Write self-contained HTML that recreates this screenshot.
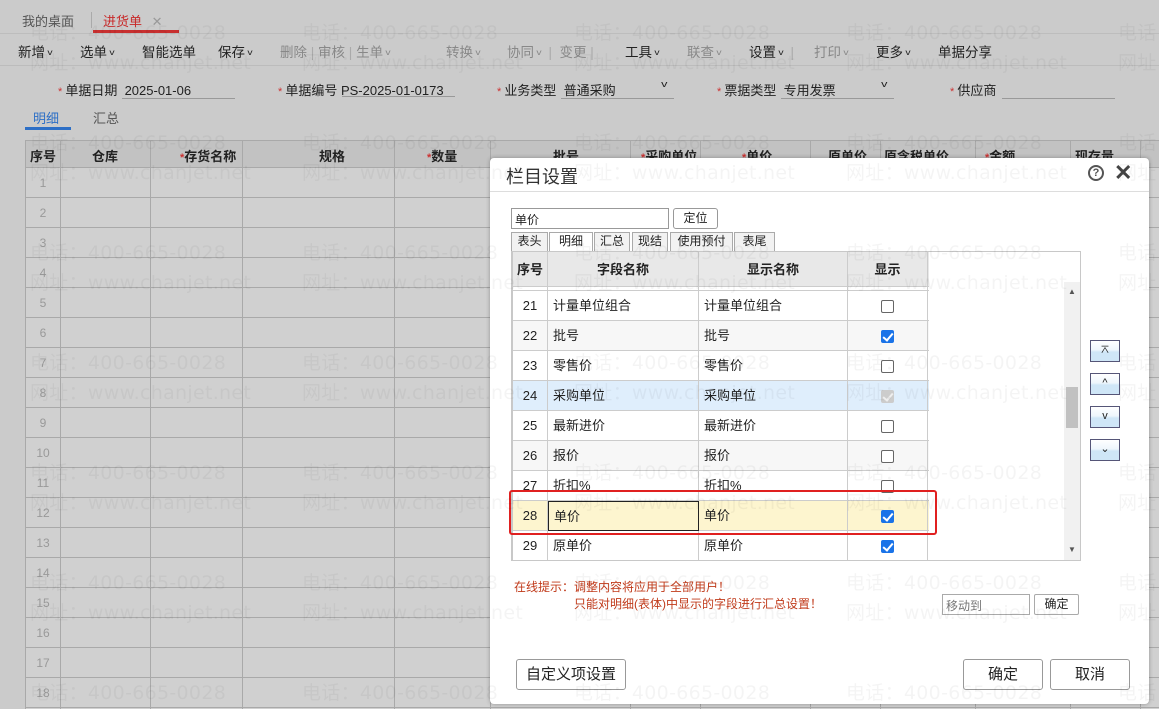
<!DOCTYPE html>
<html style="overflow:hidden;width:1159px;height:709px"><head><meta charset="utf-8"><style>
*{box-sizing:border-box;margin:0;padding:0}
body{width:1159px;height:709px;overflow:hidden;background:#cbcbcb;font-family:"Liberation Sans","Noto Sans CJK SC",sans-serif;font-size:13px;color:#222;position:relative}
.a{position:absolute;white-space:nowrap}
.st{color:#c33;font-size:11px}
.cv{font-size:8px;display:inline-block;transform:scaleX(1.3);margin-left:3px;vertical-align:2px}
.g{position:absolute;border-left:1px solid #a9a9a9}
.wm{position:absolute;font-size:19px;color:rgba(0,0,0,0.045);white-space:nowrap;letter-spacing:0.3px;z-index:50;pointer-events:none;font-family:"DejaVu Sans","Noto Sans CJK SC",sans-serif}
.dlg{position:absolute;left:490px;top:158px;width:659px;height:546px;background:#fff;border-radius:4px;z-index:10;box-shadow:0 0 4px rgba(0,0,0,.3)}
.btn{position:absolute;border:1px solid #999;border-radius:3px;background:#fff;text-align:center;font-size:15px}
.tab{position:absolute;top:74px;height:19px;border:1px solid #aaa;border-bottom:none;background:#f2f2f2;font-size:12px;text-align:center;line-height:17px}
.row{position:absolute;left:0;width:416px;height:30px;border-bottom:1px solid #ccc}
.row div{position:absolute;top:0;height:30px;line-height:30px;border-right:1px solid #ccc}
.cb{position:absolute;left:368px;top:9px;width:13px;height:13px;border:1px solid #666;border-radius:2px;background:#fff}
.cb.on{background:#1a73e8;border-color:#1a73e8}
.cb.on:after{content:"";position:absolute;left:3px;top:0px;width:4px;height:8px;border:solid #fff;border-width:0 2px 2px 0;transform:rotate(40deg)}
.cb.dis{background:#ccc;border-color:#ccc}
.cb.dis:after{content:"";position:absolute;left:3px;top:0px;width:4px;height:8px;border:solid #eee;border-width:0 2px 2px 0;transform:rotate(40deg)}
.mv{position:absolute;left:600px;width:30px;height:22px;border:1px solid #557;background:linear-gradient(#fff 0,#eef6fc 45%,#cfe6f7 55%,#cfe6f7);font-size:11px;text-align:center;line-height:18px}
</style></head><body>
<div class="a" style="left:0;top:0;width:1159px;height:34px;border-bottom:1px solid #bdbdbd"></div>
<div class="a" style="left:22px;top:11px;color:#555">我的桌面</div>
<div class="a" style="left:91px;top:12px;height:16px;border-left:1px solid #aaa"></div>
<div class="a" style="left:103px;top:11px;color:#c82828">进货单 <span style="color:#999;margin-left:6px">✕</span></div>
<div class="a" style="left:93px;top:30px;width:86px;height:3px;background:#c83030"></div>
<div class="a" style="left:0;top:35px;width:1159px;height:31px;border-bottom:1px solid #bcbcbc"></div>
<div class="a" style="left:18px;top:41px;font-size:13.5px">新增<span class="cv">v</span></div>
<div class="a" style="left:80px;top:41px;font-size:13.5px">选单<span class="cv">v</span></div>
<div class="a" style="left:142px;top:41px;font-size:13.5px">智能选单</div>
<div class="a" style="left:218px;top:41px;font-size:13.5px">保存<span class="cv">v</span></div>
<div class="a" style="left:280px;top:41px;font-size:13.5px;color:#888">删除 <span style="color:#aaa">|</span> 审核 <span style="color:#aaa">|</span> 生单<span class="cv">v</span></div>
<div class="a" style="left:446px;top:41px;font-size:13.5px;color:#888">转换<span class="cv">v</span></div>
<div class="a" style="left:507px;top:41px;font-size:13.5px;color:#888">协同<span class="cv">v</span> <span style="color:#aaa">&nbsp;|&nbsp;</span> 变更 <span style="color:#aaa">|</span></div>
<div class="a" style="left:625px;top:41px;font-size:13.5px">工具<span class="cv">v</span></div>
<div class="a" style="left:687px;top:41px;font-size:13.5px;color:#888">联查<span class="cv">v</span></div>
<div class="a" style="left:749px;top:41px;font-size:13.5px">设置<span class="cv">v</span> <span style="color:#aaa">&nbsp;|</span></div>
<div class="a" style="left:814px;top:41px;font-size:13.5px;color:#888">打印<span class="cv">v</span></div>
<div class="a" style="left:876px;top:41px;font-size:13.5px">更多<span class="cv">v</span></div>
<div class="a" style="left:938px;top:41px;font-size:13.5px">单据分享</div>
<div class="a" style="left:58px;top:80px"><span class="st">* </span>单据日期 &nbsp;2025-01-06</div>
<div class="a" style="left:122px;top:98px;width:113px;border-top:1px solid #999"></div>
<div class="a" style="left:278px;top:80px"><span class="st">* </span>单据编号 PS-2025-01-0173</div>
<div class="a" style="left:342px;top:96px;width:113px;border-top:1px solid #999"></div>
<div class="a" style="left:497px;top:80px"><span class="st">* </span>业务类型 &nbsp;普通采购</div>
<div class="a" style="left:662px;top:79px;font-size:9px;transform:scaleX(1.4)">v</div>
<div class="a" style="left:561px;top:98px;width:113px;border-top:1px solid #999"></div>
<div class="a" style="left:717px;top:80px"><span class="st">* </span>票据类型 &nbsp;专用发票</div>
<div class="a" style="left:882px;top:79px;font-size:9px;transform:scaleX(1.4)">v</div>
<div class="a" style="left:781px;top:98px;width:113px;border-top:1px solid #999"></div>
<div class="a" style="left:950px;top:80px"><span class="st">* </span>供应商</div>
<div class="a" style="left:1002px;top:98px;width:113px;border-top:1px solid #999"></div>
<div class="a" style="left:33px;top:108px;color:#2d6fc6">明细</div>
<div class="a" style="left:93px;top:108px;color:#555">汇总</div>
<div class="a" style="left:25px;top:127px;width:46px;height:3px;background:#2d6fc6"></div>
<div class="a" style="left:25px;top:140px;width:1134px;height:569px;background:#d0d0d0;border-top:1px solid #a9a9a9;border-left:1px solid #a9a9a9"></div>
<div class="a" style="left:26px;top:141px;width:1133px;height:27px;background:#c2c2c2;border-bottom:1px solid #a9a9a9"></div>
<div id="grid"></div>
<div class="a" style="left:30px;top:146px;font-weight:bold">序号</div>
<div class="a" style="left:92px;top:146px;font-weight:bold">仓库</div>
<div class="a" style="left:180px;top:146px;font-weight:bold"><span class="st">*</span>存货名称</div>
<div class="a" style="left:319px;top:146px;font-weight:bold">规格</div>
<div class="a" style="left:427px;top:146px;font-weight:bold"><span class="st">*</span>数量</div>
<div class="a" style="left:553px;top:146px;font-weight:bold">批号</div>
<div class="a" style="left:641px;top:146px;font-weight:bold"><span class="st">*</span>采购单位</div>
<div class="a" style="left:742px;top:146px;font-weight:bold"><span class="st">*</span>单价</div>
<div class="a" style="left:828px;top:146px;font-weight:bold">原单价</div>
<div class="a" style="left:884px;top:146px;font-weight:bold">原含税单价</div>
<div class="a" style="left:985px;top:146px;font-weight:bold"><span class="st">*</span>金额</div>
<div class="a" style="left:1075px;top:146px;font-weight:bold">现存量</div>
<script>
var g=document.getElementById('grid'),h='';
[60,150,242,394,490,630,700,810,880,975,1070,1140].forEach(function(x){h+='<div class="g" style="left:'+x+'px;top:141px;height:568px"></div>'});
for(var i=1;i<=18;i++){var y=168+(i-1)*30;h+='<div class="a" style="left:26px;top:'+(y+29)+'px;width:1133px;border-top:1px solid #a9a9a9"></div><div class="a" style="left:26px;top:'+(y+8)+'px;width:34px;text-align:center;color:#999;font-size:12px">'+i+'</div>';}
g.innerHTML=h;
</script>
<div class="dlg">
<div class="a" style="left:16px;top:5px;font-size:18px;color:#333">栏目设置</div>
<div class="a" style="left:598px;top:7px;width:16px;height:16px;border:2px solid #555;border-radius:50%;font-size:11px;font-weight:bold;text-align:center;line-height:12px;color:#555">?</div>
<div class="a" style="left:624px;top:2px;font-size:22px;color:#444;font-weight:bold">✕</div>
<div class="a" style="left:0;top:33px;width:659px;border-top:1px solid #ddd"></div>
<div class="a" style="left:21px;top:50px;width:158px;height:21px;border:1px solid #999;font-size:12px;padding:2px 3px">单价</div>
<div class="a" style="left:183px;top:50px;width:45px;height:21px;border:1px solid #999;border-radius:3px;font-size:12px;text-align:center;line-height:19px">定位</div>
<div class="tab" style="left:21px;width:37px">表头</div>
<div class="tab" style="left:59px;width:44px;background:#fff;height:20px">明细</div>
<div class="tab" style="left:104px;width:36px">汇总</div>
<div class="tab" style="left:142px;width:36px">现结</div>
<div class="tab" style="left:180px;width:63px">使用预付</div>
<div class="tab" style="left:244px;width:41px">表尾</div>
<div class="a" style="left:21px;top:93px;width:570px;height:310px;border:1px solid #c8c8c8;border-left:2px solid #c8c8c8;overflow:hidden">
 <div class="a" style="left:0;top:0;width:416px;height:35px;background:#e8e8e8;border-bottom:1px solid #ccc">
  <div class="a" style="left:0;top:0;width:35px;height:35px;border-right:1px solid #ccc;text-align:center;line-height:35px;font-weight:bold">序号</div>
  <div class="a" style="left:35px;top:0;width:151px;height:35px;border-right:1px solid #ccc;text-align:center;line-height:35px;font-weight:bold">字段名称</div>
  <div class="a" style="left:186px;top:0;width:149px;height:35px;border-right:1px solid #ccc;text-align:center;line-height:35px;font-weight:bold">显示名称</div>
  <div class="a" style="left:335px;top:0;width:80px;height:35px;border-right:1px solid #ccc;text-align:center;line-height:35px;font-weight:bold">显示</div>
 </div>
 <div id="rows"></div>
 <div class="a" style="left:551px;top:30px;width:16px;height:278px;background:#f1f1f1"></div>
 <div class="a" style="left:555px;top:35px;font-size:8px;color:#555">▲</div>
 <div class="a" style="left:555px;top:293px;font-size:8px;color:#555">▼</div>
 <div class="a" style="left:553px;top:135px;width:12px;height:41px;background:#c1c1c1"></div>
</div>
<div class="a" style="left:19px;top:332px;width:428px;height:45px;border:2px solid #e02020;border-radius:3px;z-index:5"></div>
<div class="mv" style="top:182px">⌅</div>
<div class="mv" style="top:215px">^</div>
<div class="mv" style="top:248px">v</div>
<div class="mv" style="top:281px">⌄</div>
<div class="a" style="left:24px;top:420px;font-size:12px;color:#c03a1a">在线提示：调整内容将应用于全部用户！</div>
<div class="a" style="left:84px;top:437px;font-size:12px;color:#c03a1a">只能对明细(表体)中显示的字段进行汇总设置！</div>
<div class="a" style="left:452px;top:436px;width:88px;height:21px;border:1px solid #aaa;font-size:12px;color:#777;padding:2px 3px">移动到</div>
<div class="a" style="left:544px;top:436px;width:45px;height:21px;border:1px solid #aaa;border-radius:2px;font-size:12px;text-align:center;line-height:19px">确定</div>
<div class="btn" style="left:26px;top:501px;width:110px;height:31px;line-height:29px">自定义项设置</div>
<div class="btn" style="left:473px;top:501px;width:80px;height:31px;line-height:29px">确定</div>
<div class="btn" style="left:560px;top:501px;width:80px;height:31px;line-height:29px">取消</div>
</div>
<div id="wmw" style="position:absolute;left:0;top:0;width:1159px;height:709px;overflow:hidden;z-index:50;pointer-events:none"></div>
<script>
var d=[[21,'计量单位组合',0],[22,'批号',1],[23,'零售价',0],[24,'采购单位',2],[25,'最新进价',0],[26,'报价',0],[27,'折扣%',0],[28,'单价',1],[29,'原单价',1]],r='';
r+='<div class="row" style="top:35px;height:4px"><div style="left:0;width:35px;height:4px"></div><div style="left:35px;width:151px;height:4px"></div><div style="left:186px;width:149px;height:4px"></div><div style="left:335px;width:80px;height:4px"></div></div>';
d.forEach(function(e,i){var y=39+i*30;var bg=e[0]==24?'#dfeefc':(e[0]==28?'#fdf5cf':(i%2?'#f7f7f7':'#fff'));
r+='<div class="row" style="top:'+y+'px;background:'+bg+'"><div style="left:0;width:35px;text-align:center">'+e[0]+'</div><div style="left:35px;width:151px;padding-left:5px;'+(e[0]==28?'border:1px solid #222;':'')+'">'+e[1]+'</div><div style="left:186px;width:149px;padding-left:5px">'+e[1]+'</div><div style="left:335px;width:80px"></div><span class="cb'+(e[2]==1?' on':e[2]==2?' dis':'')+'"></span></div>';});
document.getElementById('rows').innerHTML=r;
var w='';[30,140,250,360,470,580,690].forEach(function(y){[-240,30,302,574,846,1118].forEach(function(x){if(y+18<700)w+='<div class="wm" style="left:'+x+'px;top:'+(y-12)+'px">电话：400-665-0028</div><div class="wm" style="left:'+x+'px;top:'+(y+18)+'px">网址：www.chanjet.net</div>';else w+='<div class="wm" style="left:'+x+'px;top:'+(y-12)+'px">电话：400-665-0028</div>';});});
document.getElementById('wmw').innerHTML=w;
</script>
</body></html>
